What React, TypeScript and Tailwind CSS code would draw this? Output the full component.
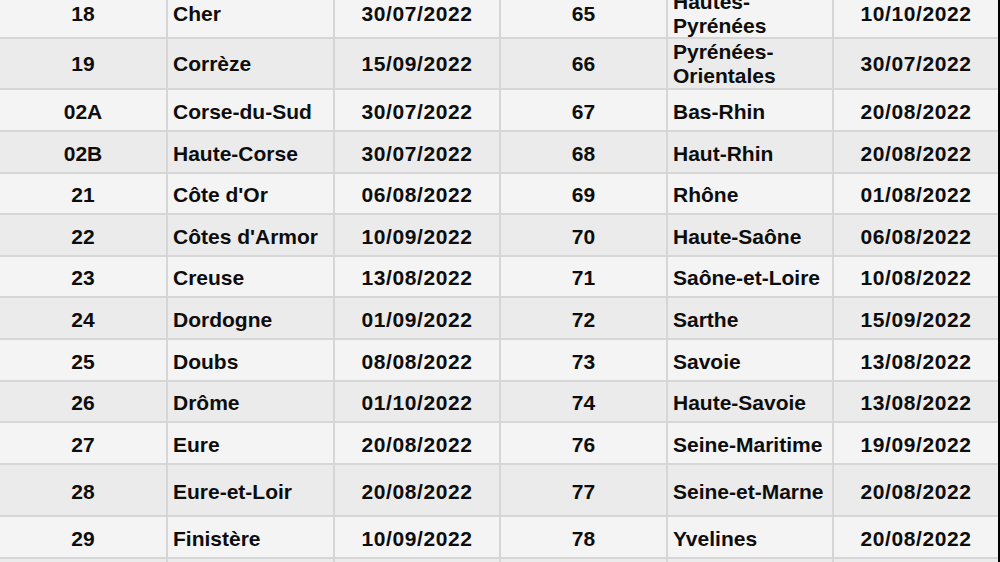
const rows = [
  { n1: '18', name1: 'Cher', d1: '30/07/2022', n2: '65', name2: 'Hautes-Pyrénées', d2: '10/10/2022', h: 'h-[49px]', pt: 'pt-0' },
  { n1: '19', name1: 'Corrèze', d1: '15/09/2022', n2: '66', name2: 'Pyrénées-Orientales', d2: '30/07/2022', h: 'h-[51px]', pt: 'pt-[1px]' },
  { n1: '02A', name1: 'Corse-du-Sud', d1: '30/07/2022', n2: '67', name2: 'Bas-Rhin', d2: '20/08/2022', h: 'h-[42px]', pt: 'pt-[3px]' },
  { n1: '02B', name1: 'Haute-Corse', d1: '30/07/2022', n2: '68', name2: 'Haut-Rhin', d2: '20/08/2022', h: 'h-[42px]', pt: 'pt-[3px]' },
  { n1: '21', name1: "Côte d'Or", d1: '06/08/2022', n2: '69', name2: 'Rhône', d2: '01/08/2022', h: 'h-[41px]', pt: 'pt-[3px]' },
  { n1: '22', name1: "Côtes d'Armor", d1: '10/09/2022', n2: '70', name2: 'Haute-Saône', d2: '06/08/2022', h: 'h-[42px]', pt: 'pt-[3px]' },
  { n1: '23', name1: 'Creuse', d1: '13/08/2022', n2: '71', name2: 'Saône-et-Loire', d2: '10/08/2022', h: 'h-[41px]', pt: 'pt-[3px]' },
  { n1: '24', name1: 'Dordogne', d1: '01/09/2022', n2: '72', name2: 'Sarthe', d2: '15/09/2022', h: 'h-[42px]', pt: 'pt-[3px]' },
  { n1: '25', name1: 'Doubs', d1: '08/08/2022', n2: '73', name2: 'Savoie', d2: '13/08/2022', h: 'h-[42px]', pt: 'pt-[3px]' },
  { n1: '26', name1: 'Drôme', d1: '01/10/2022', n2: '74', name2: 'Haute-Savoie', d2: '13/08/2022', h: 'h-[41px]', pt: 'pt-[3px]' },
  { n1: '27', name1: 'Eure', d1: '20/08/2022', n2: '76', name2: 'Seine-Maritime', d2: '19/09/2022', h: 'h-[42px]', pt: 'pt-[3px]' },
  { n1: '28', name1: 'Eure-et-Loir', d1: '20/08/2022', n2: '77', name2: 'Seine-et-Marne', d2: '20/08/2022', h: 'h-[52px]', pt: 'pt-[3px]' },
  { n1: '29', name1: 'Finistère', d1: '10/09/2022', n2: '78', name2: 'Yvelines', d2: '20/08/2022', h: 'h-[42px]', pt: 'pt-[3px]' },
  { n1: '', name1: '', d1: '', n2: '', name2: '', d2: '', h: 'h-[42px]', pt: 'pt-[3px]' },
];

const line = 'border-r-2 border-[#d6d6d6]';

export default function App() {
  return (
    <div className="w-[1000px] h-[562px] overflow-hidden bg-black">
      <div
        className="w-[998px] -mt-[10px] text-[21px] font-bold text-[#0d0d0d]"
        style={{ fontFamily: '"Liberation Sans", Arial, sans-serif' }}
      >
        {rows.map((r, i) => (
          <div
            key={i}
            className={`grid grid-cols-[168px_167px_166px_167px_166px_164px] border-b-2 border-[#d6d6d6] ${r.h} ${i % 2 === 1 ? 'bg-[#ebebeb]' : 'bg-[#f4f4f4]'}`}
          >
            <div className={`flex items-center justify-center ${r.pt} ${line}`}>{r.n1}</div>
            <div className={`flex items-center pl-[5px] pr-1 leading-[24px] ${r.pt} ${line}`}>{r.name1}</div>
            <div className={`flex items-center justify-center tracking-[0.6px] ${r.pt} ${line}`}>{r.d1}</div>
            <div className={`flex items-center justify-center ${r.pt} ${line}`}>{r.n2}</div>
            <div className={`flex items-center pl-[5px] pr-1 leading-[24px] ${r.pt} ${line}`}>{r.name2}</div>
            <div className={`flex items-center justify-center tracking-[0.6px] ${r.pt}`}>{r.d2}</div>
          </div>
        ))}
      </div>
    </div>
  );
}
